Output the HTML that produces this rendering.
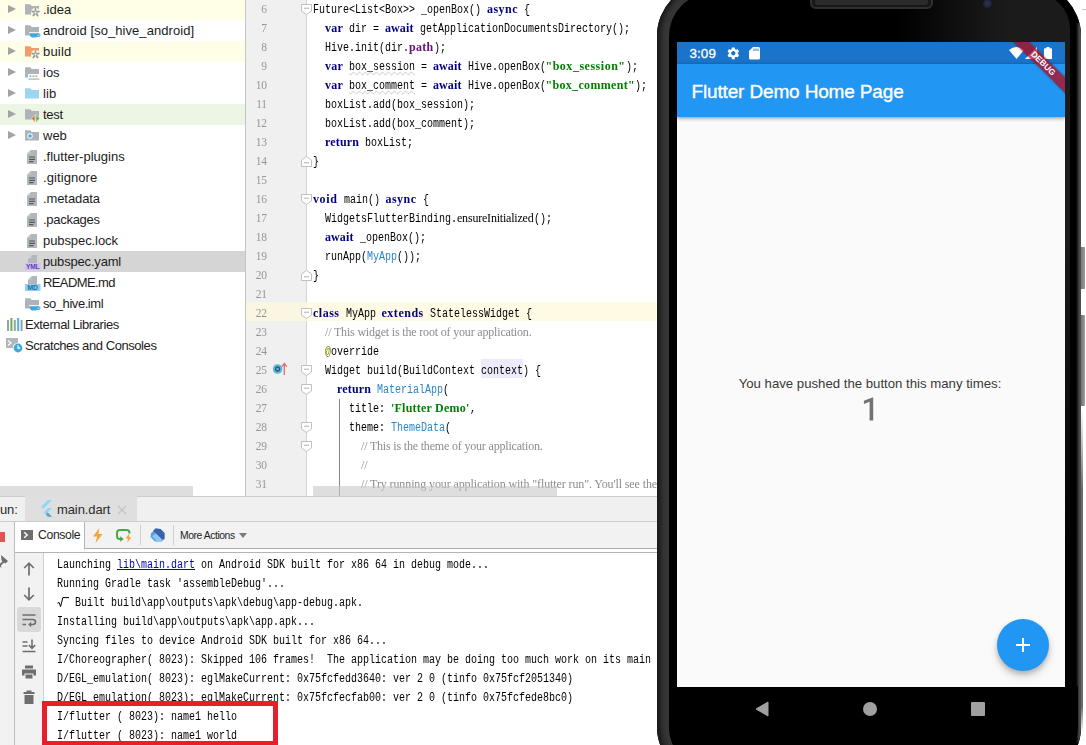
<!DOCTYPE html>
<html><head><meta charset="utf-8"><title>IDE</title>
<style>
*{box-sizing:border-box;margin:0;padding:0}
html,body{width:1086px;height:745px;overflow:hidden;background:#fff}
body{position:relative;font-family:"Liberation Sans",sans-serif;font-size:13px;color:#1a1a1a}
.abs{position:absolute}
/* ---------- project tree ---------- */
#tree{position:absolute;left:0;top:0;width:245px;height:496px;background:#fff;overflow:hidden}
.row{position:absolute;left:0;width:245px;height:21px;line-height:21px;white-space:nowrap}
.row .lbl{position:absolute;top:0px;font-size:13px;color:#1c1c1c}
.row svg{position:absolute}
.arr{position:absolute;left:8px;top:6px;width:0;height:0;border-left:8px solid #a3a3a3;border-top:4.5px solid transparent;border-bottom:4.5px solid transparent}
/* ---------- editor ---------- */
#gut{position:absolute;left:245px;top:0;width:62px;height:496px;background:#f0f0f0;border-left:1px solid #c4c4c4;border-right:1px solid #d4d4d4}
#code{position:absolute;left:307px;top:0;width:352px;height:496px;background:#fff;overflow:hidden}
.ln{will-change:transform;position:absolute;left:246px;width:20.5px;text-align:right;font-family:"Liberation Serif",serif;font-size:11.5px;color:#969696;height:19px;line-height:19px;letter-spacing:-.4px}
.cl{will-change:transform;position:absolute;left:313px;height:19px;line-height:19px;white-space:pre;font-family:"Liberation Mono",monospace;font-size:12px;color:#000}
.cl span{line-height:12px}
.m{display:inline-block;transform:scaleX(.8333);transform-origin:0 50%;white-space:pre;font-family:"Liberation Mono",monospace;font-size:12px;overflow:visible}
.k{font-family:"Liberation Serif",serif;font-weight:bold;color:#000080}
.s{font-family:"Liberation Serif",serif;font-weight:bold;color:#008000}
.f{font-family:"Liberation Serif",serif;font-weight:bold;color:#660e7a}
.c{font-family:"Liberation Serif",serif;color:#8c8c8c}
.i{font-family:"Liberation Serif",serif;color:#000}
.hl{}
.u .m{text-decoration:underline wavy #c4c4c4;text-decoration-thickness:1px;text-underline-offset:1px;text-decoration-skip-ink:none}
.t{color:#2a86c8}
.a{color:#808000}
.fold{position:absolute;left:301px;width:11px;height:11px}
/* ---------- bottom ---------- */
#bot{position:absolute;left:0;top:496px;width:660px;height:249px;background:#f2f2f2}
.co{will-change:transform;position:absolute;left:57px;height:19px;line-height:19px;white-space:pre;font-family:"Liberation Mono",monospace;font-size:12px;color:#000}
.co span{line-height:12px}
.lk{color:#0000b4;text-decoration:underline}
/* ---------- phone ---------- */
#phone{position:absolute;left:657px;top:-17px;width:424px;height:797px;border-radius:53px;background:#363636;box-shadow:inset 0 0 0 1px #1c1c1c,inset 4px 0 5px #1a1a1a;overflow:hidden}
</style></head><body>
<div id="tree">
<div class="row" style="top:-1px;background:#fffee6;"><i class="arr"></i><svg style="left:25px;top:4px" width="16" height="15" viewBox="0 0 16 15"><path d="M0 1.2 H5.2 L6.8 3 H14 V11.5 H0 Z" fill="#aeb3b9"/><g transform="translate(10.5,9.5)"><circle r="4.6" fill="#fffee6"/><g stroke="#9a9fa5" stroke-width="1.9" stroke-linecap="round"><path d="M0 0 L0 -3.6"/><path d="M0 0 L3.4 -1.1"/><path d="M0 0 L2.1 2.9"/><path d="M0 0 L-2.1 2.9"/><path d="M0 0 L-3.4 -1.1"/></g><circle r="1" fill="#fffee6"/></g></svg><span class="lbl" style="left:43px;letter-spacing:0px">.idea</span></div>
<div class="row" style="top:20px;"><i class="arr"></i><svg style="left:25px;top:4px" width="16" height="15" viewBox="0 0 16 15"><path d="M0 1.2 H5.2 L6.8 3 H14 V11.5 H0 Z" fill="#aeb3b9"/><path d="M4 9.2 H14.5 V8.2 H4 Z" fill="#fff"/><path d="M4.6 9.4 H13 Q13 13.6 8.8 13.6 Q4.6 13.6 4.6 9.4 Z" fill="#3fa9dc"/><path d="M12.6 9.8 Q15.6 9.6 14.8 11.6 Q14 12.8 12 12.4" fill="none" stroke="#3fa9dc" stroke-width="1.1"/></svg><span class="lbl" style="left:43px;letter-spacing:0.06px">android [so_hive_android]</span></div>
<div class="row" style="top:41px;background:#fffee6;"><i class="arr"></i><svg style="left:25px;top:4px" width="16" height="15" viewBox="0 0 16 15"><path d="M0 1.2 H5.2 L6.8 3 H14 V11.5 H0 Z" fill="#f29a6b"/><g transform="translate(10.5,9.5)"><circle r="4.6" fill="#fffee6"/><g stroke="#9a9fa5" stroke-width="1.9" stroke-linecap="round"><path d="M0 0 L0 -3.6"/><path d="M0 0 L3.4 -1.1"/><path d="M0 0 L2.1 2.9"/><path d="M0 0 L-2.1 2.9"/><path d="M0 0 L-3.4 -1.1"/></g><circle r="1" fill="#fffee6"/></g></svg><span class="lbl" style="left:43px;letter-spacing:0.2px">build</span></div>
<div class="row" style="top:62px;"><i class="arr"></i><svg style="left:25px;top:4px" width="16" height="15" viewBox="0 0 16 15"><path d="M0 1.2 H5.2 L6.8 3 H14 V11.5 H0 Z" fill="#aeb3b9"/><rect x="3" y="8" width="12" height="4.5" fill="#fff"/><rect x="4.5" y="9.3" width="1.8" height="1.8" fill="#6fb8e0"/><rect x="7.5" y="9.3" width="1.8" height="1.8" fill="#8fc58f"/><rect x="10.5" y="9.3" width="1.8" height="1.8" fill="#e0a080"/><rect x="3.5" y="12.6" width="11" height="1" fill="#9aa0a6"/></svg><span class="lbl" style="left:43px;letter-spacing:0px">ios</span></div>
<div class="row" style="top:83px;"><i class="arr"></i><svg style="left:25px;top:4px" width="16" height="15" viewBox="0 0 16 15"><path d="M0 1.2 H5.2 L6.8 3 H14 V11.5 H0 Z" fill="#9dd4f0"/></svg><span class="lbl" style="left:43px;letter-spacing:0.1px">lib</span></div>
<div class="row" style="top:104px;background:#edf5e4;"><i class="arr"></i><svg style="left:25px;top:4px" width="16" height="15" viewBox="0 0 16 15"><path d="M0 1.2 H5.2 L6.8 3 H14 V11.5 H0 Z" fill="#aeb3b9"/><path d="M6.5 10.5 L10 6.5 V14.5 Z" fill="#e0703a" stroke="#edf5e4" stroke-width=".6"/><path d="M14.6 10.5 L11 6.5 V14.5 Z" fill="#5fb04a" stroke="#edf5e4" stroke-width=".6"/></svg><span class="lbl" style="left:43px;letter-spacing:-0.3px">test</span></div>
<div class="row" style="top:125px;"><i class="arr"></i><svg style="left:25px;top:4px" width="16" height="15" viewBox="0 0 16 15"><path d="M0 1.2 H5.2 L6.8 3 H14 V11.5 H0 Z" fill="#aeb3b9"/><circle cx="5" cy="7" r="2.7" fill="#fff"/><circle cx="5" cy="7" r="1.8" fill="#3fa9dc"/></svg><span class="lbl" style="left:43px;letter-spacing:0px">web</span></div>
<div class="row" style="top:146px;"><svg style="left:27px;top:4px" width="11" height="15" viewBox="0 0 11 15"><path d="M4 0 H10 V14 H0 V4 Z" fill="#b3b7bc"/><path d="M0 3.4 L3.4 0 V3.4 Z" fill="#c9ccd0"/><path d="M2 7h6M2 9.3h6M2 11.6h4.5" stroke="#55595e" stroke-width="1.2"/></svg><span class="lbl" style="left:43px;letter-spacing:0px">.flutter-plugins</span></div>
<div class="row" style="top:167px;"><svg style="left:27px;top:4px" width="11" height="15" viewBox="0 0 11 15"><path d="M4 0 H10 V14 H0 V4 Z" fill="#b3b7bc"/><path d="M0 3.4 L3.4 0 V3.4 Z" fill="#c9ccd0"/><path d="M2 7h6M2 9.3h6M2 11.6h4.5" stroke="#55595e" stroke-width="1.2"/></svg><span class="lbl" style="left:43px;letter-spacing:0.08px">.gitignore</span></div>
<div class="row" style="top:188px;"><svg style="left:27px;top:4px" width="11" height="15" viewBox="0 0 11 15"><path d="M4 0 H10 V14 H0 V4 Z" fill="#b3b7bc"/><path d="M0 3.4 L3.4 0 V3.4 Z" fill="#c9ccd0"/><path d="M2 7h6M2 9.3h6M2 11.6h4.5" stroke="#55595e" stroke-width="1.2"/></svg><span class="lbl" style="left:43px;letter-spacing:-0.1px">.metadata</span></div>
<div class="row" style="top:209px;"><svg style="left:27px;top:4px" width="11" height="15" viewBox="0 0 11 15"><path d="M4 0 H10 V14 H0 V4 Z" fill="#b3b7bc"/><path d="M0 3.4 L3.4 0 V3.4 Z" fill="#c9ccd0"/><path d="M2 7h6M2 9.3h6M2 11.6h4.5" stroke="#55595e" stroke-width="1.2"/></svg><span class="lbl" style="left:43px;letter-spacing:-0.28px">.packages</span></div>
<div class="row" style="top:230px;"><svg style="left:27px;top:4px" width="11" height="15" viewBox="0 0 11 15"><path d="M4 0 H10 V14 H0 V4 Z" fill="#b3b7bc"/><path d="M0 3.4 L3.4 0 V3.4 Z" fill="#c9ccd0"/><path d="M2 7h6M2 9.3h6M2 11.6h4.5" stroke="#55595e" stroke-width="1.2"/></svg><span class="lbl" style="left:43px;letter-spacing:-0.08px">pubspec.lock</span></div>
<div class="row" style="top:251px;background:#d5d5d5;"><svg style="left:25px;top:4px" width="16" height="16" viewBox="0 0 16 16"><path d="M7 0 H12 V8 H3 V4 Z" fill="#b3b7bc"/><path d="M3 3.4 L6.4 0 V3.4 Z" fill="#c9ccd0"/><rect x="0" y="8" width="15.5" height="7" fill="#d3c0f0"/><text x="7.7" y="14" font-family="Liberation Sans" font-weight="bold" font-size="6.6" fill="#6040b0" text-anchor="middle" letter-spacing="-.2">YML</text></svg><span class="lbl" style="left:43px;letter-spacing:-0.18px">pubspec.yaml</span></div>
<div class="row" style="top:272px;"><svg style="left:25px;top:4px" width="16" height="16" viewBox="0 0 16 16"><path d="M7 0 H12 V8 H3 V4 Z" fill="#b3b7bc"/><path d="M3 3.4 L6.4 0 V3.4 Z" fill="#c9ccd0"/><rect x="0" y="8" width="15.5" height="7" fill="#8fd0ee"/><text x="7.7" y="14" font-family="Liberation Sans" font-weight="bold" font-size="6.8" fill="#286a9c" text-anchor="middle">MD</text></svg><span class="lbl" style="left:43px;letter-spacing:-0.6px">README.md</span></div>
<div class="row" style="top:293px;"><svg style="left:25px;top:4px" width="16" height="15" viewBox="0 0 16 15"><path d="M0 1.2 H5.2 L6.8 3 H14 V11.5 H0 Z" fill="#aeb3b9"/><path d="M4 9.2 H14.5 V8.2 H4 Z" fill="#fff"/><path d="M4.6 9.4 H13 Q13 13.6 8.8 13.6 Q4.6 13.6 4.6 9.4 Z" fill="#3fa9dc"/><path d="M12.6 9.8 Q15.6 9.6 14.8 11.6 Q14 12.8 12 12.4" fill="none" stroke="#3fa9dc" stroke-width="1.1"/></svg><span class="lbl" style="left:43px;letter-spacing:-0.45px">so_hive.iml</span></div>
<div class="row" style="top:314px;"><svg style="left:7px;top:4px" width="16" height="14" viewBox="0 0 16 14"><rect x="0" y="2" width="2" height="11" fill="#9aa0a6"/><rect x="3.4" y="0" width="2" height="13" fill="#62b543"/><rect x="6.8" y="2" width="2" height="11" fill="#9aa0a6"/><rect x="10.2" y="0" width="2" height="13" fill="#40b6e0"/><rect x="13.6" y="2" width="2" height="11" fill="#9aa0a6"/></svg><span class="lbl" style="left:25px;letter-spacing:-0.4px">External Libraries</span></div>
<div class="row" style="top:335px;"><svg style="left:6px;top:2px" width="18" height="17" viewBox="0 0 18 17"><path d="M0 1 H12 V11 H0 Z" fill="#b3b7bc"/><path d="M2 3.5 L5 6 L2 8.5" fill="none" stroke="#fff" stroke-width="1.2"/><circle cx="12" cy="11" r="5.2" fill="#fff"/><circle cx="12" cy="11" r="4.4" fill="#3fa9dc"/><path d="M12 8.3 V11.2 H14.2" fill="none" stroke="#fff" stroke-width="1.2"/></svg><span class="lbl" style="left:25px;letter-spacing:-0.43px">Scratches and Consoles</span></div>
<div class="abs" style="left:0;top:486px;width:193px;height:10px;background:#dedede"></div>
</div>
<div id="gut"></div><div id="code"></div>
<div class="abs" style="left:246px;top:302px;width:61px;height:19px;background:#fbf6e2"></div>
<div class="abs" style="left:307px;top:302px;width:352px;height:19px;background:#fffae3"></div>
<div class="abs" style="left:481px;top:359px;width:42px;height:19px;background:#ebebfb"></div>
<div class="abs" style="left:339px;top:399px;width:1px;height:97px;background:#8a8a8a"></div>
<div class="ln" style="top:0px">6</div>
<div class="cl" style="top:1px"><span class="m" style="width:174px">Future&lt;List&lt;Box&gt;&gt; _openBox() </span><span class="k" style="letter-spacing:0.466px">async</span><span class="m" style="width:12px"> {</span></div>
<div class="ln" style="top:19px">7</div>
<div class="cl" style="top:20px"><span class="m" style="width:12px">  </span><span class="k" style="letter-spacing:0.223px">var</span><span class="m" style="width:42px"> dir = </span><span class="k" style="letter-spacing:0.100px">await</span><span class="m" style="width:216px"> getApplicationDocumentsDirectory();</span></div>
<div class="ln" style="top:38px">8</div>
<div class="cl" style="top:39px"><span class="m" style="width:96px">  Hive.init(dir.</span><span class="f" style="letter-spacing:0.290px">path</span><span class="m" style="width:12px">);</span></div>
<div class="ln" style="top:57px">9</div>
<div class="cl" style="top:58px"><span class="m" style="width:12px">  </span><span class="k" style="letter-spacing:0.223px">var</span><span class="m" style="width:6px"> </span><span class="u"><span class="m" style="width:66px">box_session</span></span><span class="m" style="width:18px"> = </span><span class="k" style="letter-spacing:0.100px">await</span><span class="m" style="width:84px"> Hive.openBox(</span><span class="s" style="letter-spacing:0.512px">"box_session"</span><span class="m" style="width:12px">);</span></div>
<div class="ln" style="top:76px">10</div>
<div class="cl" style="top:77px"><span class="m" style="width:12px">  </span><span class="k" style="letter-spacing:0.223px">var</span><span class="m" style="width:6px"> </span><span class="u"><span class="m" style="width:66px">box_comment</span></span><span class="m" style="width:18px"> = </span><span class="k" style="letter-spacing:0.100px">await</span><span class="m" style="width:84px"> Hive.openBox(</span><span class="s" style="letter-spacing:0.322px">"box_comment"</span><span class="m" style="width:12px">);</span></div>
<div class="ln" style="top:95px">11</div>
<div class="cl" style="top:96px"><span class="m" style="width:162px">  boxList.add(box_session);</span></div>
<div class="ln" style="top:114px">12</div>
<div class="cl" style="top:115px"><span class="m" style="width:162px">  boxList.add(box_comment);</span></div>
<div class="ln" style="top:133px">13</div>
<div class="cl" style="top:134px"><span class="m" style="width:12px">  </span><span class="k" style="letter-spacing:0.148px">return</span><span class="m" style="width:54px"> boxList;</span></div>
<div class="ln" style="top:152px">14</div>
<div class="cl" style="top:153px"><span class="m" style="width:6px">}</span></div>
<div class="ln" style="top:171px">15</div>
<div class="ln" style="top:190px">16</div>
<div class="cl" style="top:191px"><span class="k" style="letter-spacing:0.620px">void</span><span class="m" style="width:48px"> main() </span><span class="k" style="letter-spacing:0.466px">async</span><span class="m" style="width:12px"> {</span></div>
<div class="ln" style="top:209px">17</div>
<div class="cl" style="top:210px"><span class="m" style="width:144px">  WidgetsFlutterBinding.</span><span class="i" style="letter-spacing:-0.204px">ensureInitialized</span><span class="m" style="width:18px">();</span></div>
<div class="ln" style="top:228px">18</div>
<div class="cl" style="top:229px"><span class="m" style="width:12px">  </span><span class="k" style="letter-spacing:0.100px">await</span><span class="m" style="width:72px"> _openBox();</span></div>
<div class="ln" style="top:247px">19</div>
<div class="cl" style="top:248px"><span class="m" style="width:54px">  runApp(</span><span class="m t" style="width:30px">MyApp</span><span class="m" style="width:24px">());</span></div>
<div class="ln" style="top:266px">20</div>
<div class="cl" style="top:267px"><span class="m" style="width:6px">}</span></div>
<div class="ln" style="top:285px">21</div>
<div class="ln" style="top:304px">22</div>
<div class="cl" style="top:305px"><span class="k" style="letter-spacing:0.500px">class</span><span class="m" style="width:42px"> MyApp </span><span class="k" style="letter-spacing:0.519px">extends</span><span class="m" style="width:108px"> StatelessWidget {</span></div>
<div class="ln" style="top:323px">23</div>
<div class="cl" style="top:324px"><span class="m" style="width:12px">  </span><span class="c" style="letter-spacing:-0.176px">// This widget is the root of your application.</span></div>
<div class="ln" style="top:342px">24</div>
<div class="cl" style="top:343px"><span class="m" style="width:12px">  </span><span class="m a" style="width:6px">@</span><span class="m" style="width:48px">override</span></div>
<div class="ln" style="top:361px">25</div>
<div class="cl" style="top:362px"><span class="m" style="width:168px">  Widget build(BuildContext </span><span class="m hl" style="width:42px">context</span><span class="m" style="width:18px">) {</span></div>
<div class="ln" style="top:380px">26</div>
<div class="cl" style="top:381px"><span class="m" style="width:24px">    </span><span class="k" style="letter-spacing:0.148px">return</span><span class="m" style="width:6px"> </span><span class="m t" style="width:66px">MaterialApp</span><span class="m" style="width:6px">(</span></div>
<div class="ln" style="top:399px">27</div>
<div class="cl" style="top:400px"><span class="m" style="width:78px">      title: </span><span class="s" style="letter-spacing:0.220px">'Flutter Demo'</span><span class="m" style="width:6px">,</span></div>
<div class="ln" style="top:418px">28</div>
<div class="cl" style="top:419px"><span class="m" style="width:78px">      theme: </span><span class="m t" style="width:54px">ThemeData</span><span class="m" style="width:6px">(</span></div>
<div class="ln" style="top:437px">29</div>
<div class="cl" style="top:438px"><span class="m" style="width:48px">        </span><span class="c" style="letter-spacing:-0.182px">// This is the theme of your application.</span></div>
<div class="ln" style="top:456px">30</div>
<div class="cl" style="top:457px"><span class="m" style="width:48px">        </span><span class="c" style="letter-spacing:-0.085px">//</span></div>
<div class="ln" style="top:475px">31</div>
<div class="cl" style="top:476px"><span class="m" style="width:48px">        </span><span class="c" style="letter-spacing:-0.110px">// Try running your application with "flutter run". You'll see the</span></div>
<svg class="fold" style="top:4px" viewBox="0 0 11 11"><path d="M.5 .5 H10.5 V7 L5.5 10.5 L.5 7 Z" fill="#fff" stroke="#c0c0c0"/><path d="M3 4.2 H8" stroke="#b0b0b0"/></svg>
<svg class="fold" style="top:156px" viewBox="0 0 11 11"><path d="M.5 10.5 H10.5 V4 L5.5 .5 L.5 4 Z" fill="#fff" stroke="#c0c0c0"/><path d="M3 6.8 H8" stroke="#b0b0b0"/></svg>
<svg class="fold" style="top:194px" viewBox="0 0 11 11"><path d="M.5 .5 H10.5 V7 L5.5 10.5 L.5 7 Z" fill="#fff" stroke="#c0c0c0"/><path d="M3 4.2 H8" stroke="#b0b0b0"/></svg>
<svg class="fold" style="top:270px" viewBox="0 0 11 11"><path d="M.5 10.5 H10.5 V4 L5.5 .5 L.5 4 Z" fill="#fff" stroke="#c0c0c0"/><path d="M3 6.8 H8" stroke="#b0b0b0"/></svg>
<svg class="fold" style="top:308px" viewBox="0 0 11 11"><path d="M.5 .5 H10.5 V7 L5.5 10.5 L.5 7 Z" fill="#fff" stroke="#c0c0c0"/><path d="M3 4.2 H8" stroke="#b0b0b0"/></svg>
<svg class="fold" style="top:365px" viewBox="0 0 11 11"><path d="M.5 .5 H10.5 V7 L5.5 10.5 L.5 7 Z" fill="#fff" stroke="#c0c0c0"/><path d="M3 4.2 H8" stroke="#b0b0b0"/></svg>
<svg class="fold" style="top:384px" viewBox="0 0 11 11"><path d="M.5 .5 H10.5 V7 L5.5 10.5 L.5 7 Z" fill="#fff" stroke="#c0c0c0"/><path d="M3 4.2 H8" stroke="#b0b0b0"/></svg>
<svg class="fold" style="top:422px" viewBox="0 0 11 11"><path d="M.5 .5 H10.5 V7 L5.5 10.5 L.5 7 Z" fill="#fff" stroke="#c0c0c0"/><path d="M3 4.2 H8" stroke="#b0b0b0"/></svg>
<svg class="fold" style="top:441px" viewBox="0 0 11 11"><path d="M.5 .5 H10.5 V7 L5.5 10.5 L.5 7 Z" fill="#fff" stroke="#c0c0c0"/><path d="M3 4.2 H8" stroke="#b0b0b0"/></svg>
<svg class="abs" style="left:272px;top:360.5px" width="18" height="17" viewBox="0 0 18 17"><circle cx="5.6" cy="8" r="4.8" fill="#5fb8d8"/><circle cx="5.6" cy="8" r="2" fill="none" stroke="#2a5a78" stroke-width="1.3"/><path d="M12.3 14 V3 M9.8 5.6 L12.3 2.6 L14.8 5.6" fill="none" stroke="#e06a6a" stroke-width="1.3"/></svg>
<div class="abs" style="left:313px;top:486px;width:244px;height:10px;background:rgba(200,200,200,.6)"></div>
<div id="bot">
<div class="abs" style="left:0;top:0;width:660px;height:26px;background:#f0f0f0;border-bottom:1px solid #cdcdcd;border-top:1px solid #cdcdcd"></div>
<div class="abs" style="left:25px;top:0;width:112px;height:25px;background:#dfdfdf"></div>
<div class="abs" style="left:-9.5px;top:5px;font-size:13px;color:#2b2b2b;line-height:18px">Run:</div>
<div class="abs" style="left:57px;top:5px;font-size:13px;color:#2b2b2b;line-height:18px;letter-spacing:-.1px">main.dart</div>
<svg class="abs" style="left:117px;top:9px" width="10" height="10" viewBox="0 0 10 10"><path d="M1 1 L9 9 M9 1 L1 9" stroke="#c2c2c2" stroke-width="1.1"/></svg>
<svg class="abs" style="left:39px;top:4px" width="14" height="18" viewBox="0 0 14 18"><path d="M9 0 L13 0 L4.5 8.7 L2.3 6.6 Z" fill="#8fd6f7"/><path d="M9 8 L13 8 L8.8 12.4 L13 16.8 L9 16.8 L4.6 12.4 Z" fill="#8fd6f7"/><path d="M8.8 12.4 L13 16.8 L9 16.8 L6.7 14.5 Z" fill="#6a9ec2"/></svg>
<div class="abs" style="left:0;top:26px;width:15px;height:223px;background:#f2f2f2;border-right:1px solid #bdbdbd"></div>
<div class="abs" style="left:0;top:36px;width:5px;height:10px;background:#e25555"></div>
<svg class="abs" style="left:-5px;top:59px" width="13" height="14" viewBox="0 0 13 14"><path d="M6 0 L13 6 L10.5 8.5 L9 7.6 L6 10.6 L6.4 13 L2 9 L4.4 9.4 L7.4 6.4 L6.5 5 Z" fill="#6e6e6e"/></svg>
<div class="abs" style="left:15px;top:26px;width:69px;height:31px;background:#fff"></div>
<div class="abs" style="left:84px;top:26px;width:1px;height:27px;background:#b4b4b4"></div>
<div class="abs" style="left:85px;top:26px;width:575px;height:27px;background:#f2f2f2;border-bottom:1px solid #b0b0b0"></div>
<div class="abs" style="left:85px;top:53px;width:575px;height:3px;background:#fff"></div>
<div class="abs" style="left:15px;top:56px;width:645px;height:1px;background:#b4b4b4"></div>
<svg class="abs" style="left:21px;top:34px" width="12" height="10" viewBox="0 0 12 10"><rect width="12" height="10" fill="#6e6e6e"/><path d="M3.2 2.2 L6.2 5 L3.2 7.8" fill="none" stroke="#fff" stroke-width="1.4"/></svg>
<div class="abs" style="left:38px;top:31px;font-size:12.2px;color:#1e1e1e;line-height:17px;letter-spacing:-.35px">Console</div>
<svg class="abs" style="left:92px;top:32px" width="12" height="15" viewBox="0 0 12 15"><path d="M7.4 0 L1 8.4 H5.2 L3.6 15 L10.6 6 H6.4 Z" fill="#f2a43a"/></svg>
<svg class="abs" style="left:116px;top:32px" width="17" height="15" viewBox="0 0 17 15"><path d="M5 11 H4 Q1 11 1 8 V5 Q1 2 4 2 H10.5 Q13.5 2 13.5 5 V5.5" fill="none" stroke="#4aa84a" stroke-width="2"/><path d="M4.2 8.2 L7.8 11 L4.2 13.8 Z" fill="#4aa84a"/><path d="M13.2 5.5 L9.6 10.4 H12 L11.2 14.6 L15.4 9.2 H13 Z" fill="#f2a43a"/></svg>
<div class="abs" style="left:140px;top:29px;width:1px;height:20px;background:#d0d0d0"></div>
<svg class="abs" style="left:149.5px;top:32px" width="15" height="14" viewBox="0 0 15 14"><path d="M5.5 0.5 L10.5 1 L14.5 5 V11 L11.5 13.5 H5 L0.5 9 L1 5.5 Z" fill="#5a9be6"/><path d="M5.5 .5 L10.5 1 L14.5 5 V11 L11.8 11.2 L3.2 2.8 Z" fill="#3b62a8"/><path d="M2 8 L7 13.5 H11.5 L11.8 11.2 L6 5.5 Z" fill="#8cc6f6"/></svg>
<div class="abs" style="left:173px;top:29px;width:1px;height:20px;background:#d0d0d0"></div>
<div class="abs" style="left:180px;top:32px;font-size:10.4px;color:#1e1e1e;line-height:15px;letter-spacing:-.45px">More Actions</div>
<div class="abs" style="left:239px;top:37px;width:0;height:0;border-top:5px solid #7a7a7a;border-left:4px solid transparent;border-right:4px solid transparent"></div>
<div class="abs" style="left:16px;top:57px;width:28px;height:192px;background:#f2f2f2;border-right:1px solid #d0d0d0"></div>
<div class="abs" style="left:44px;top:57px;width:616px;height:192px;background:#fff"></div>
<svg class="abs" style="left:21.0px;top:64.5px" width="16" height="16" viewBox="0 0 16 16"><path d="M8 14.5 V2.5 M3.2 7 L8 2.2 L12.8 7" fill="none" stroke="#6e6e6e" stroke-width="1.7"/></svg>
<svg class="abs" style="left:21.0px;top:89.5px" width="16" height="16" viewBox="0 0 16 16"><path d="M8 1.5 V13.5 M3.2 9 L8 13.8 L12.8 9" fill="none" stroke="#6e6e6e" stroke-width="1.7"/></svg>
<div class="abs" style="left:17px;top:111px;width:24px;height:25px;background:#d9d9d9;border-radius:3px"></div>
<svg class="abs" style="left:21.0px;top:116.0px" width="16" height="16" viewBox="0 0 16 16"><path d="M1.5 3 H14.5 M1.5 7.5 H11.5 Q14.5 7.5 14.5 10 Q14.5 12.5 11.5 12.5 H9 M1.5 12.5 H5" fill="none" stroke="#6e6e6e" stroke-width="1.6"/><path d="M10.2 9.8 L7.2 12.5 L10.2 15.2 Z" fill="#6e6e6e"/></svg>
<svg class="abs" style="left:21.0px;top:141.5px" width="16" height="16" viewBox="0 0 16 16"><path d="M1.5 4 H6.5 M1.5 8 H6.5 M1.5 13.5 H14.5 M11 1.5 V10 M7.8 7 L11 10.4 L14.2 7" fill="none" stroke="#6e6e6e" stroke-width="1.6"/></svg>
<svg class="abs" style="left:21.0px;top:167.5px" width="16" height="16" viewBox="0 0 16 16"><path d="M4 1.5 H12 V4.5 H4 Z" fill="#6e6e6e"/><path d="M1 5.5 H15 V11.5 H12.5 V9.5 H3.5 V11.5 H1 Z" fill="#6e6e6e"/><path d="M4.5 10.5 H11.5 V14.5 H4.5 Z" fill="#6e6e6e"/></svg>
<svg class="abs" style="left:21.0px;top:192.5px" width="16" height="16" viewBox="0 0 16 16"><path d="M5.5 1.5 H10.5 V3 H13.5 V5 H2.5 V3 H5.5 Z" fill="#6e6e6e"/><path d="M3.5 6 H12.5 V15 H3.5 Z" fill="#6e6e6e"/></svg>
</div>
<div class="co" style="top:556px"><span class="m" style="width:60px">Launching </span><span class="m lk" style="width:78px">lib\main.dart</span><span class="m" style="width:294px"> on Android SDK built for x86 64 in debug mode...</span></div>
<div class="co" style="top:575px"><span class="m" style="width:228px">Running Gradle task 'assembleDebug'...</span></div>
<div class="co" style="top:594px"><span class="m" style="width:18px"></span><span class="m" style="width:288px">Built build\app\outputs\apk\debug\app-debug.apk.</span></div>
<div class="co" style="top:613px"><span class="m" style="width:258px">Installing build\app\outputs\apk\app.apk...</span></div>
<div class="co" style="top:632px"><span class="m" style="width:330px">Syncing files to device Android SDK built for x86 64...</span></div>
<div class="co" style="top:651px"><span class="m" style="width:594px">I/Choreographer( 8023): Skipped 106 frames!  The application may be doing too much work on its main</span></div>
<div class="co" style="top:670px"><span class="m" style="width:516px">D/EGL_emulation( 8023): eglMakeCurrent: 0x75fcfedd3640: ver 2 0 (tinfo 0x75fcf2051340)</span></div>
<div class="co" style="top:689px"><span class="m" style="width:516px">D/EGL_emulation( 8023): eglMakeCurrent: 0x75fcfecfab00: ver 2 0 (tinfo 0x75fcfede8bc0)</span></div>
<div class="co" style="top:708px"><span class="m" style="width:180px">I/flutter ( 8023): name1 hello</span></div>
<div class="co" style="top:727px"><span class="m" style="width:180px">I/flutter ( 8023): name1 world</span></div>
<svg class="abs" style="left:57px;top:597px" width="13" height="11" viewBox="0 0 13 11"><path d="M.5 6.2 L2 5.4 L3.6 9.6 L5.8 .6 H12" fill="none" stroke="#000" stroke-width="1"/></svg>
<div class="abs" style="left:42px;top:701px;width:236px;height:45px;border:5px solid #e81e2a"></div>
<div id="phone">
<div class="abs" style="left:212px;top:0;width:212px;height:797px;border-radius:0 53px 53px 0;background:linear-gradient(90deg,#363636,#000 30%)"></div>
<div class="abs" style="left:12px;top:10px;width:401px;height:777px;border-radius:43px 36px 36px 43px;background:linear-gradient(90deg,#000 0,#000 57%,#1b1b1b 84%)"></div>
<div class="abs" style="left:419px;top:40px;width:5px;height:720px;background:linear-gradient(90deg,#000,#3a3a3a 55%,#585858 85%,#3c3c3c)"></div>
<div class="abs" style="left:404px;top:250px;width:10px;height:500px;background:linear-gradient(180deg,rgba(0,0,0,0),#000 70%)"></div>
<div class="abs" style="left:12px;top:703px;width:409px;height:84px;border-radius:0 0 43px 43px;background:#000"></div>
<div class="abs" style="left:153px;top:2px;width:123px;height:24px;border-radius:6px;background:#181818;border:2px solid #303030"></div>
<div class="abs" style="left:158px;top:14px;width:113px;height:8px;border-radius:0 0 3px 3px;background:#2b2b2b"></div>
<div class="abs" style="left:326px;top:16px;width:9px;height:9px;border-radius:50%;background:radial-gradient(#30305a,#1a1a26)"></div>
</div>
<div id="scr" class="abs" style="left:677px;top:42px;width:388px;height:645px;background:#fafafa;overflow:hidden">
<div class="abs" style="left:0;top:0;width:388px;height:22px;background:#1a74cc"></div>
<div class="abs" style="left:0;top:22px;width:388px;height:53px;background:#2196f3;box-shadow:0 1px 4px rgba(0,0,0,.45)"></div>
<div class="abs" style="left:12.5px;top:4px;font-size:13.4px;line-height:16px;color:#fff;letter-spacing:.1px;-webkit-text-stroke:.3px #fff">3:09</div>
<svg class="abs" style="left:48.5px;top:3.6px" width="14.6" height="14.6" viewBox="0 0 24 24"><path fill="#fff" d="M19.14 12.94c.04-.3.06-.61.06-.94 0-.32-.02-.64-.07-.94l2.03-1.58a.49.49 0 0 0 .12-.61l-1.92-3.32a.488.488 0 0 0-.59-.22l-2.39.96c-.5-.38-1.03-.7-1.62-.94l-.36-2.54a.484.484 0 0 0-.48-.41h-3.84c-.24 0-.43.17-.47.41l-.36 2.54c-.59.24-1.13.57-1.62.94l-2.39-.96c-.22-.08-.47 0-.59.22L2.74 8.87c-.12.21-.08.47.12.61l2.03 1.58c-.05.3-.09.63-.09.94s.02.64.07.94l-2.03 1.58a.49.49 0 0 0-.12.61l1.92 3.32c.12.22.37.29.59.22l2.39-.96c.5.38 1.03.7 1.62.94l.36 2.54c.05.24.24.41.48.41h3.84c.24 0 .44-.17.47-.41l.36-2.54c.59-.24 1.13-.56 1.62-.94l2.39.96c.22.08.47 0 .59-.22l1.92-3.32c.12-.22.07-.47-.12-.61l-2.01-1.58zM12 15.6c-1.98 0-3.6-1.62-3.6-3.6s1.620-3.6 3.6-3.600 3.600 1.620 3.600 3.600-1.620 3.600-3.600 3.600z"/></svg>
<svg class="abs" style="left:71.5px;top:5px" width="11" height="12.5" viewBox="0 0 11 12.5"><path d="M4 0 H9.5 Q11 0 11 1.5 V11 Q11 12.5 9.5 12.5 H1.5 Q0 12.5 0 11 V4 Z" fill="#fff"/><path d="M5 1.5 V4 M7 1.5 V4 M9 1.5 V4" stroke="#1a74cc" stroke-width=".9"/></svg>
<svg class="abs" style="left:331.5px;top:4.5px" width="15" height="12" viewBox="0 0 15 12"><path d="M7.5 12 L0 3 Q7.5 -3 15 3 Z" fill="#fff"/></svg>
<svg class="abs" style="left:348px;top:5px" width="12" height="12" viewBox="0 0 12 12"><path d="M12 0 V12 H0 Z" fill="#fff"/></svg>
<svg class="abs" style="left:366.5px;top:4.5px" width="8" height="12.5" viewBox="0 0 8 12.5"><path d="M2.4 0 H5.6 V1.3 H7 Q8 1.3 8 2.3 V12.5 H0 V2.3 Q0 1.3 1 1.3 H2.4 Z" fill="#fff"/></svg>
<div class="abs" style="left:14.5px;top:36.5px;font-size:19px;line-height:26px;color:#fff;letter-spacing:-.15px;-webkit-text-stroke:.35px #fff">Flutter Demo Home Page</div>
<div class="abs" style="left:315.7px;top:16.1px;width:100px;height:11.4px;background:rgba(185,5,25,.74);transform:rotate(44.6deg);transform-origin:50% 50%;text-align:center;font-size:8.4px;line-height:11.8px;font-weight:bold;color:#fff;letter-spacing:.05px;box-shadow:0 0 2px rgba(60,20,40,.6)">DEBUG</div>
<div class="abs" style="left:-1px;top:332.7px;width:388px;text-align:center;font-size:13.2px;line-height:18px;color:#383838">You have pushed the button this many times:</div>
<svg class="abs" style="left:183px;top:353px" width="20" height="30" viewBox="0 0 20 30"><path d="M13.2 2.4 L13.2 25.6 L9.6 25.6 L9.6 6.7 L3.9 8.9 L3.9 5.8 L12.3 2.4 Z" fill="#737373"/></svg>
<div class="abs" style="left:320px;top:577px;width:52px;height:52px;border-radius:50%;background:#2196f3;box-shadow:0 3px 5px rgba(0,0,0,.2),0 6px 10px rgba(0,0,0,.12)"></div>
<svg class="abs" style="left:338px;top:595px" width="16" height="16" viewBox="0 0 16 16"><path d="M8 1 V15 M1 8 H15" stroke="#fff" stroke-width="2"/></svg>
</div>
<div class="abs" style="left:677px;top:687px;width:388px;height:58px;background:#000"></div>
<svg class="abs" style="left:755px;top:701px" width="14" height="16" viewBox="0 0 14 16"><path d="M13 1 V15 L1 8 Z" fill="#a0a0a0" stroke="#a0a0a0" stroke-linejoin="round"/></svg>
<div class="abs" style="left:863px;top:702px;width:14px;height:14px;border-radius:50%;background:#a0a0a0"></div>
<div class="abs" style="left:971px;top:702px;width:14px;height:14px;border-radius:1px;background:#a0a0a0"></div>
<div class="abs" style="left:1081px;top:410px;width:1.6px;height:322px;background:linear-gradient(180deg,rgba(110,110,110,0),#6a6a6a 25%,#6a6a6a 92%,rgba(110,110,110,0))"></div>
<div class="abs" style="left:1081px;top:247px;width:4px;height:42px;background:linear-gradient(90deg,#7a7a7a,#9a9a9a);border-radius:0 1px 1px 0"></div>
<div class="abs" style="left:1081px;top:315px;width:4px;height:91px;background:linear-gradient(90deg,#707070,#a0a0a0);border-radius:0 1px 1px 0"></div>
<div class="abs" style="left:1082px;top:9px;width:4px;height:1px;background:#c8c8c8"></div>
</body></html>
